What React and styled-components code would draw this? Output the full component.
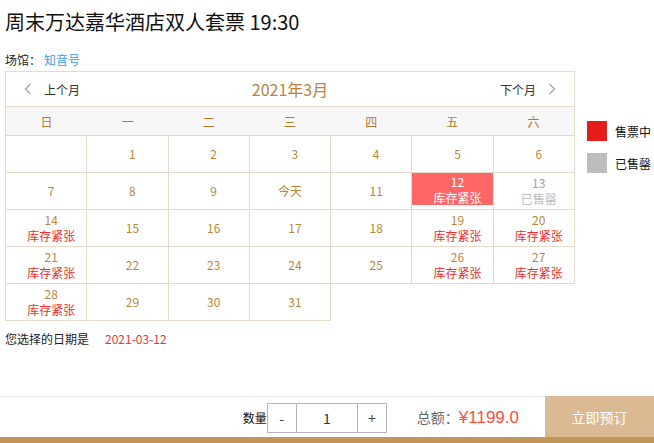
import React from "react";
import styled, { createGlobalStyle } from "styled-components";

const Global = createGlobalStyle`
  html, body { margin: 0; padding: 0; background: #fff; overflow: hidden; }
  body { font-family: "Noto Sans CJK SC", "Noto Sans", sans-serif; color: #333; }
  * { box-sizing: border-box; }
`;

const Page = styled.div`
  width: 654px;
  height: 443px;
  display: flex;
  flex-direction: column;
`;

const Content = styled.div`
  padding-left: 5px;
`;

const Title = styled.h1`
  margin: 8px 0 0;
  font-size: 20px;
  line-height: 28px;
  font-weight: 400;
  color: #111;
`;

const VenueLine = styled.div`
  margin-top: 14px;
  font-size: 12px;
  line-height: 20px;
  color: #222;
`;

const VenueLink = styled.span`
  margin-left: 3px;
  color: #3d9be9;
`;

const CalRow = styled.div`
  display: flex;
  margin-top: 1px;
`;

const Calendar = styled.div`
  width: 570px;
  flex-shrink: 0;
`;

const Nav = styled.div`
  height: 36px;
  border: 1px solid #e8dac8;
  display: flex;
  align-items: center;
  justify-content: space-between;
  padding: 0 18px 0 18px;
`;

const NavBtn = styled.div`
  display: flex;
  align-items: center;
  gap: 12px;
  font-size: 12px;
  color: #333;
  width: 70px;
  justify-content: ${(p) => (p.$right ? "flex-end" : "flex-start")};
`;

const MonthTitle = styled.div`
  font-size: 16px;
  color: #b5853e;
`;

const WeekRow = styled.div`
  display: grid;
  grid-template-columns: repeat(7, 1fr);
  height: 29px;
  background: #f7f7f7;
  border-left: 1px solid #e8dac8;
  border-right: 1px solid #e8dac8;
  border-bottom: 1px solid #e8dac8;
`;

const WeekDay = styled.div`
  display: flex;
  align-items: center;
  justify-content: center;
  font-size: 12px;
  color: #b07a2a;
`;

const DayGrid = styled.div`
  display: grid;
  grid-template-columns: repeat(7, 81.28px);
  border-left: 1px solid #e8dac8;
`;

const DayCell = styled.div`
  height: 37px;
  border-right: 1px solid #e8dac8;
  border-bottom: 1px solid #e8dac8;
  display: flex;
  flex-direction: column;
  align-items: center;
  justify-content: center;
  font-size: 12px;
  line-height: 16px;
  padding-left: ${(p) => (p.$centered ? "0" : "10px")};
  padding-bottom: ${(p) => (p.$selected ? "3px" : "0")};
  background: ${(p) => (p.$selected ? "#ff6666" : "transparent")};
  box-shadow: ${(p) => (p.$selected ? "inset 0 -4px 0 #fff" : "none")};
  color: ${(p) => (p.$selected ? "#fff" : p.$sold ? "#a898a6" : "#b8873c")};
`;

const DayLabel = styled.div`
  color: ${(p) => (p.$selected ? "#fff" : p.$sold ? "#bcbcbc" : "#f22a2a")};
`;

const Legend = styled.div`
  margin-left: 12px;
  padding-top: 50px;
  display: flex;
  flex-direction: column;
  gap: 12px;
`;

const LegendItem = styled.div`
  display: flex;
  align-items: center;
  gap: 8px;
  font-size: 12px;
  color: #111;
  white-space: nowrap;
`;

const Swatch = styled.span`
  width: 20px;
  height: 20px;
  background: ${(p) => p.$color};
`;

const Chosen = styled.div`
  margin-top: 8px;
  font-size: 12px;
  line-height: 20px;
  color: #222;
  display: flex;
  gap: 16px;
`;

const ChosenDate = styled.span`
  color: #e8343a;
`;

const Footer = styled.div`
  margin-top: auto;
  height: 47px;
  display: flex;
  border-bottom: 6px solid #c0975a;
`;

const FooterMain = styled.div`
  flex: 1;
  border-top: 1px solid #e5e5e5;
  display: flex;
  align-items: center;
  justify-content: flex-end;
  padding-right: 26px;
`;

const QtyLabel = styled.span`
  font-size: 12px;
  color: #111;
`;

const Stepper = styled.div`
  display: flex;
  height: 30px;
  border: 1px solid #b5b5b5;
  margin-top: 2px;
`;

const StepBtn = styled.div`
  width: 29px;
  display: flex;
  align-items: center;
  justify-content: center;
  font-size: 14px;
  color: #444;
  border-left: ${(p) => (p.$left ? "1px solid #b5b5b5" : "0")};
  border-right: ${(p) => (p.$right ? "1px solid #b5b5b5" : "0")};
`;

const QtyValue = styled.div`
  width: 60px;
  display: flex;
  align-items: center;
  justify-content: center;
  font-size: 14px;
  color: #333;
`;

const Total = styled.div`
  margin-left: 30px;
  display: flex;
  align-items: baseline;
  font-size: 14px;
  color: #666;
`;

const Price = styled.span`
  font-family: "Liberation Sans", Arial, sans-serif;
  font-size: 17px;
  color: #ff4c3b;
`;

const BookBtn = styled.div`
  width: 109px;
  background: #dab993;
  color: #fff;
  font-size: 14px;
  display: flex;
  align-items: center;
  justify-content: center;
`;

const Chevron = ({ dir }) => (
  <svg width="8" height="12" viewBox="0 0 8 12">
    <polyline
      points={dir === "left" ? "6.5,1 1.5,6 6.5,11" : "1.5,1 6.5,6 1.5,11"}
      fill="none"
      stroke="#a0a0a0"
      strokeWidth="1.2"
    />
  </svg>
);

const weekdays = ["日", "一", "二", "三", "四", "五", "六"];
const tight = "库存紧张";
const days = [
  { empty: true },
  { n: 1 }, { n: 2 }, { n: 3 }, { n: 4 }, { n: 5 }, { n: 6 },
  { n: 7 }, { n: 8 }, { n: 9 }, { n: "今天", centered: true }, { n: 11 },
  { n: 12, label: tight, selected: true }, { n: 13, label: "已售罄", sold: true },
  { n: 14, label: tight }, { n: 15 }, { n: 16 }, { n: 17 }, { n: 18 },
  { n: 19, label: tight }, { n: 20, label: tight },
  { n: 21, label: tight }, { n: 22 }, { n: 23 }, { n: 24 }, { n: 25 },
  { n: 26, label: tight }, { n: 27, label: tight },
  { n: 28, label: tight }, { n: 29 }, { n: 30 }, { n: 31 },
];

export default function App() {
  return (
    <Page>
      <Global />
      <Content>
        <Title>周末万达嘉华酒店双人套票 19:30</Title>
        <VenueLine>
          场馆：<VenueLink>知音号</VenueLink>
        </VenueLine>
        <CalRow>
          <Calendar>
            <Nav>
              <NavBtn>
                <Chevron dir="left" />
                <span>上个月</span>
              </NavBtn>
              <MonthTitle>2021年3月</MonthTitle>
              <NavBtn $right>
                <span>下个月</span>
                <Chevron dir="right" />
              </NavBtn>
            </Nav>
            <WeekRow>
              {weekdays.map((w) => (
                <WeekDay key={w}>{w}</WeekDay>
              ))}
            </WeekRow>
            <DayGrid>
              {days.map((d, i) => (
                <DayCell
                  key={i}
                  $selected={d.selected}
                  $sold={d.sold}
                  $centered={d.centered}
                >
                  {!d.empty && <div>{d.n}</div>}
                  {d.label && (
                    <DayLabel $selected={d.selected} $sold={d.sold}>
                      {d.label}
                    </DayLabel>
                  )}
                </DayCell>
              ))}
            </DayGrid>
          </Calendar>
          <Legend>
            <LegendItem>
              <Swatch $color="#e51c1c" />
              售票中
            </LegendItem>
            <LegendItem>
              <Swatch $color="#bdbdbd" />
              已售罄
            </LegendItem>
          </Legend>
        </CalRow>
        <Chosen>
          <span>您选择的日期是</span>
          <ChosenDate>2021-03-12</ChosenDate>
        </Chosen>
      </Content>
      <Footer>
        <FooterMain>
          <QtyLabel>数量</QtyLabel>
          <Stepper>
            <StepBtn $right>-</StepBtn>
            <QtyValue>1</QtyValue>
            <StepBtn $left>+</StepBtn>
          </Stepper>
          <Total>
            总额：<Price>¥1199.0</Price>
          </Total>
        </FooterMain>
        <BookBtn>立即预订</BookBtn>
      </Footer>
    </Page>
  );
}
